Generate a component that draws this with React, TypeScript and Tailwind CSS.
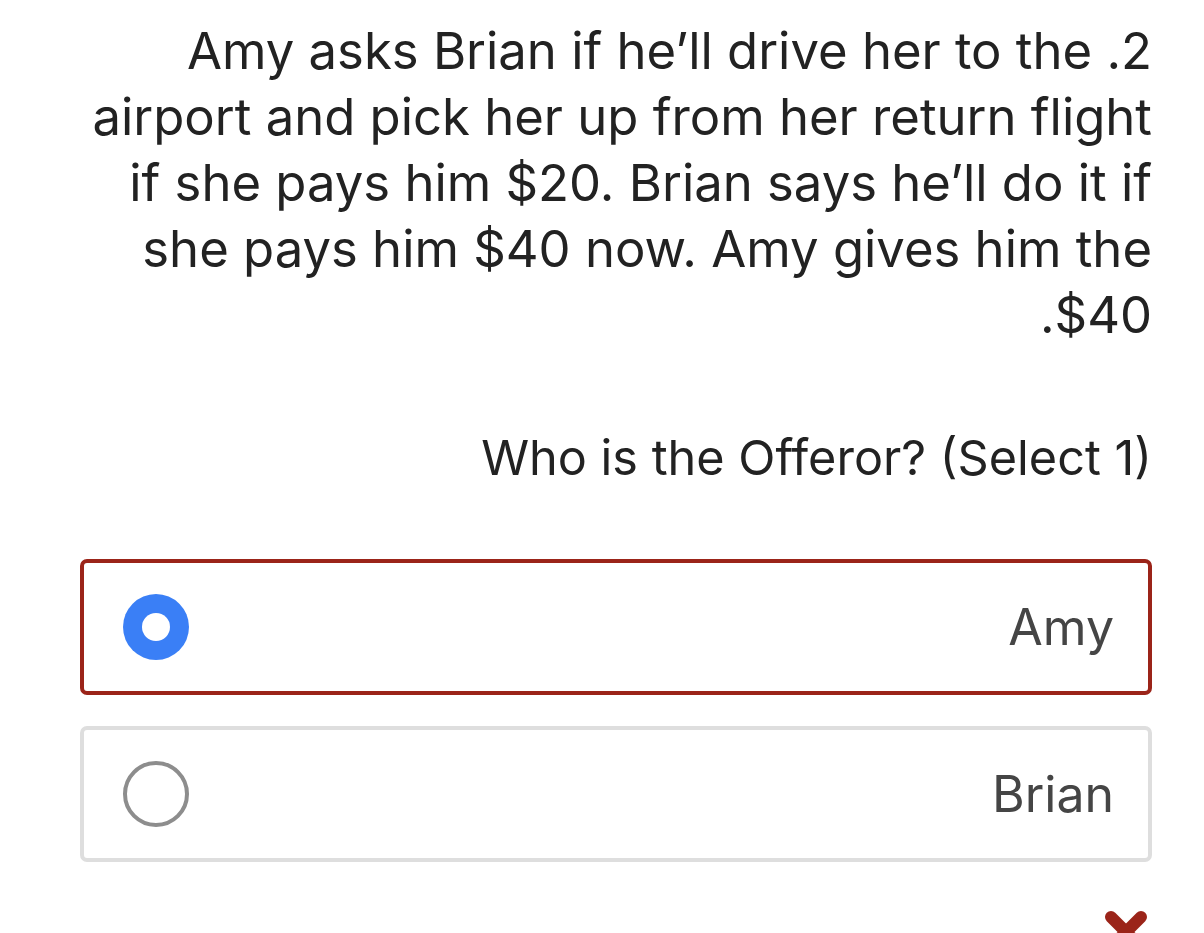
interface OptionProps {
    label: string;
    selected?: boolean;
}

function Option({ label, selected }: OptionProps) {
    return (
        <div
            className={`flex h-[136px] items-center justify-between rounded-[7px] border-[4px] bg-white pl-[39px] pr-[34px] ${
                selected ? "border-[#9b2419]" : "border-[#dedede]"
            }`}
        >
            {selected ? (
                <div className="flex h-[66px] w-[66px] items-center justify-center rounded-full bg-[#3a7ff6]">
                    <div className="h-[28px] w-[28px] rounded-full bg-white" />
                </div>
            ) : (
                <div className="h-[66px] w-[66px] rounded-full border-[4px] border-[#8d8d8d]" />
            )}
            <span className="text-[50px] leading-none text-[#454545]">{label}</span>
        </div>
    );
}

export default function App() {
    return (
        <div
            className="min-h-screen overflow-hidden bg-white pl-[80px] pr-[52px] pt-[18px] text-[#222]"
            style={{ fontFamily: "Inter, 'Noto Sans', sans-serif" }}
        >
            {/* Question stem, rendered right-to-left */}
            <p dir="rtl" className="-ml-[14px] text-[50.8px] leading-[66px]">
                2. Amy asks Brian if he’ll drive her to the airport and pick her up from her return flight if she pays him $20. Brian says he’ll do it if she pays him $40 now. Amy gives him the $40.
            </p>

            <p className="mt-[77px] text-right text-[48.6px] leading-[66px]">
                Who is the Offeror? (Select 1)
            </p>

            <div className="mt-[68px] flex flex-col gap-[31px]">
                <Option label="Amy" selected />
                <Option label="Brian" />
            </div>

            <div className="mt-[48px] flex justify-end pr-[4px]">
                <svg width="44" height="44" viewBox="0 0 44 44">
                    <path d="M7 7 L37 37 M37 7 L7 37" stroke="#9b2419" strokeWidth="12" strokeLinecap="round" />
                </svg>
            </div>
        </div>
    );
}
